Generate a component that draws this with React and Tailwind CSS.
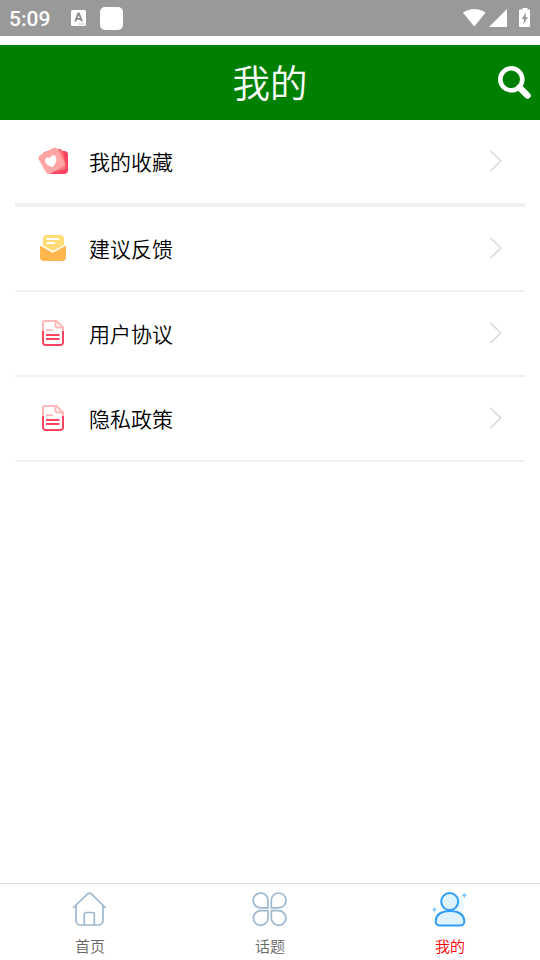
import React, { useState } from 'react';

const FavoriteIcon = () => (
  <svg width="32" height="28" viewBox="0 0 32 28">
    <rect x="11" y="4" width="20" height="23" rx="4" fill="#fb4560" />
    <rect x="7" y="3" width="20.5" height="21.5" rx="4" fill="#ff7479" transform="rotate(-12 17 14)" />
    <rect x="4" y="3.3" width="21.5" height="21" rx="3.5" fill="#ffa5a6" transform="rotate(-29 14.7 13.8)" />
    <path
      d="M15.800 20C11.800 19 8.400 17 8.100 13.900 7.800 11 11 9.400 13 11.300 13.400 8.100 17 7.300 18.700 9.700 20.700 12.700 18.400 17 15.800 20Z"
      fill="#fff"
    />
  </svg>
);

const FeedbackIcon = () => (
  <svg width="32" height="28" viewBox="0 0 32 28">
    <path d="M10 1h13a4 4 0 0 1 4 4v9l-10.500 6L6 14V5a4 4 0 0 1 4-4Z" fill="#ffdc74" />
    <path d="M9.500 5H22M9.500 9H18" stroke="#fff" strokeWidth="2" />
    <path d="M3 11.200 15.800 18.500 29 11.200V23a4 4 0 0 1-4 4H7a4 4 0 0 1-4-4Z" fill="#ffb74d" />
    <path d="M3 10.700 15.800 17.800 29 10.700" stroke="#fff" strokeWidth="1.500" fill="none" />
  </svg>
);

const DocumentIcon = () => (
  <svg width="32" height="28" viewBox="0 0 32 28" fill="none">
    <path d="M6 13V4a2 2 0 0 1 2-2h11.500L26 8.500V13" stroke="#ffb6b8" strokeWidth="2" />
    <path d="M18.500 2v4.500a2 2 0 0 0 2 2H26" stroke="#ffb6b8" strokeWidth="2" />
    <path d="M9 11.200h7" stroke="#ffb6b8" strokeWidth="1.800" />
    <path d="M6 12v11.500a2.500 2.500 0 0 0 2.500 2.500h15a2.500 2.500 0 0 0 2.500-2.500V12" stroke="#fb4560" strokeWidth="2" />
    <path d="M9 16h13.500M9 20h13.500" stroke="#fb4560" strokeWidth="2" />
  </svg>
);

const HomeIcon = ({ color }) => (
  <svg width="36" height="36" viewBox="0 0 36 36" fill="none" stroke={color} strokeWidth="1.700" strokeLinecap="round" strokeLinejoin="round">
    <path d="M1.500 16.500 15.300 3.200a3.200 3.200 0 0 1 4.400 0L33.300 16.500" />
    <path d="M4 14.500V29.500a4.500 4.500 0 0 0 4.500 4.500H26.500a4.500 4.500 0 0 0 4.500-4.500V14.500" />
    <path d="M12.300 34V23.500a2 2 0 0 1 2-2h6a2 2 0 0 1 2 2V34" />
  </svg>
);

const TopicIcon = ({ color }) => (
  <svg width="36" height="36" viewBox="0 0 36 36" fill="none" stroke={color} strokeWidth="1.700" strokeLinejoin="round">
    <path d="M16 16.800H9.200A7.400 7.400 0 1 1 16 9.400Z" />
    <path d="M19.300 16.800H26.500A7.400 7.400 0 1 0 19.300 9.400Z" />
    <path d="M16 19.700H9.200A7.300 7.300 0 1 0 16 27Z" />
    <path d="M19.300 19.700H26.500A7.300 7.300 0 1 1 19.300 27Z" />
  </svg>
);

const UserIcon = ({ color }) => (
  <svg width="36" height="36" viewBox="0 0 36 36">
    <circle cx="21" cy="14" r="11" fill="#e9f7ff" />
    <path d="M3.700 29.500C4.500 23.500 9.500 20 18 20S31.500 23.500 32.300 29.500C32.700 32.500 31 34.400 28.500 34.400H7.500C5 34.400 3.300 32.500 3.700 29.500Z" fill="#dff3ff" stroke={color} strokeWidth="2" />
    <circle cx="17.700" cy="10.600" r="8.500" fill="#dff3ff" stroke={color} strokeWidth="2" />
    <path d="M32.300 1.300 33.300 3.500 35.200 4.300 33.300 5.200 32.300 7.300 31.300 5.200 29.400 4.300 31.300 3.500Z" fill="#7fc7fa" />
    <path d="M2.400 15.500 3.300 17.800 5.200 18.700 3.300 19.600 2.400 22 1.500 19.600 0 18.700 1.500 17.800Z" fill="#7fc7fa" />
  </svg>
);

const MENU = [
  { label: '我的收藏', icon: FavoriteIcon, row: 'h-[87px] border-b-4' },
  { label: '建议反馈', icon: FeedbackIcon, row: 'h-[85px] border-b-2' },
  { label: '用户协议', icon: DocumentIcon, row: 'h-[85px] border-b-2' },
  { label: '隐私政策', icon: DocumentIcon, row: 'h-[85px] border-b-2' },
];

const TABS = [
  { label: '首页', icon: HomeIcon },
  { label: '话题', icon: TopicIcon },
  { label: '我的', icon: UserIcon },
];

const StatusBar = () => (
  <div className="h-9 bg-[#999999] flex items-center text-white pl-[9px] pr-[9px] shrink-0">
    <span className="font-[Roboto] text-[21px] font-medium leading-9 w-[62px] pt-[2px]">5:09</span>
    <svg width="15" height="16" viewBox="0 0 15 16">
      <rect width="15" height="16" rx="1.500" fill="#fff" />
      <path d="m4.200 11.500 3.100-8h.6l3.100 8M5.400 8.900h4.400" stroke="#8c8c8c" strokeWidth="1.900" fill="none" />
      <path d="M8 14h1.200M10.200 14h1.200M12.400 14h1.200" stroke="#999" strokeWidth="1.200" />
    </svg>
    <span className="ml-[14px] w-[23px] h-[23px] rounded-[5px] bg-white" />
    <svg className="ml-auto -mt-px" width="68" height="20" viewBox="0 0 68 20" fill="#fff">
      <path d="M0 4.800C6.500-.2 16-.2 22.500 4.800L11.300 18.500Z" />
      <path d="M44 1V19H26Z" />
      <path d="M59.500 1.500V0h5V1.500H66a1 1 0 0 1 1 1V18a1 1 0 0 1-1 1H57a1 1 0 0 1-1-1V2.500a1 1 0 0 1 1-1Z" />
      <path d="m63 4-4.200 7h2.300L60.500 16.500l4.300-7.500h-2.300Z" fill="#999" />
    </svg>
  </div>
);

const App = () => {
  const [activo, setActivo] = useState('我的');

  return (
    <div className="w-full h-screen bg-white flex flex-col overflow-hidden font-[350] font-['Noto_Sans_CJK_SC',sans-serif]">
      <StatusBar />

      <header className="mt-[9px] h-[75px] bg-[#008000] text-white grid grid-cols-[1fr_auto_1fr] items-center shrink-0">
        <h1 className="col-start-2 text-[37.500px] leading-[72px] pb-[3px] font-[350]">我的</h1>
        <svg className="justify-self-end mr-2" width="34" height="34" viewBox="0 0 34 34" fill="none" stroke="#fff">
          <circle cx="13.300" cy="13.300" r="11" strokeWidth="4.600" />
          <path d="m21.500 21.500 8 8" strokeWidth="6.500" strokeLinecap="round" />
        </svg>
      </header>

      <main className="flex-1 px-[15px]">
        {MENU.map(({ label, icon: Icon, row }) => (
          <div key={label} className={`${row} border-[#f0f0f0] flex items-center`}>
            <span className="ml-[22px] w-[52px] pb-[2px]"><Icon /></span>
            <span className="text-[21px] text-black leading-8 pb-[2px]">{label}</span>
            <svg className="ml-auto mr-[22px] mb-px" width="14" height="22" viewBox="0 0 14 22" fill="none">
              <path d="m1.500 1 10.300 10L1.500 21" stroke="#d8d8d8" strokeWidth="1.500" />
            </svg>
          </div>
        ))}
      </main>

      <nav className="h-[77px] border-t border-[#dcdcdc] grid grid-cols-3 shrink-0">
        {TABS.map(({ label, icon: Icon }) => (
          <button key={label} className="flex flex-col items-center pt-[7px]" onClick={() => setActivo(label)}>
            <Icon color={label === '我的' ? '#2e9df7' : '#9db8cf'} />
            <span className={`text-[15px] leading-[22px] mt-2 ${activo === label ? 'text-[#ff0000]' : 'text-[#666666]'}`}>
              {label}
            </span>
          </button>
        ))}
      </nav>
    </div>
  );
};

export default App;
